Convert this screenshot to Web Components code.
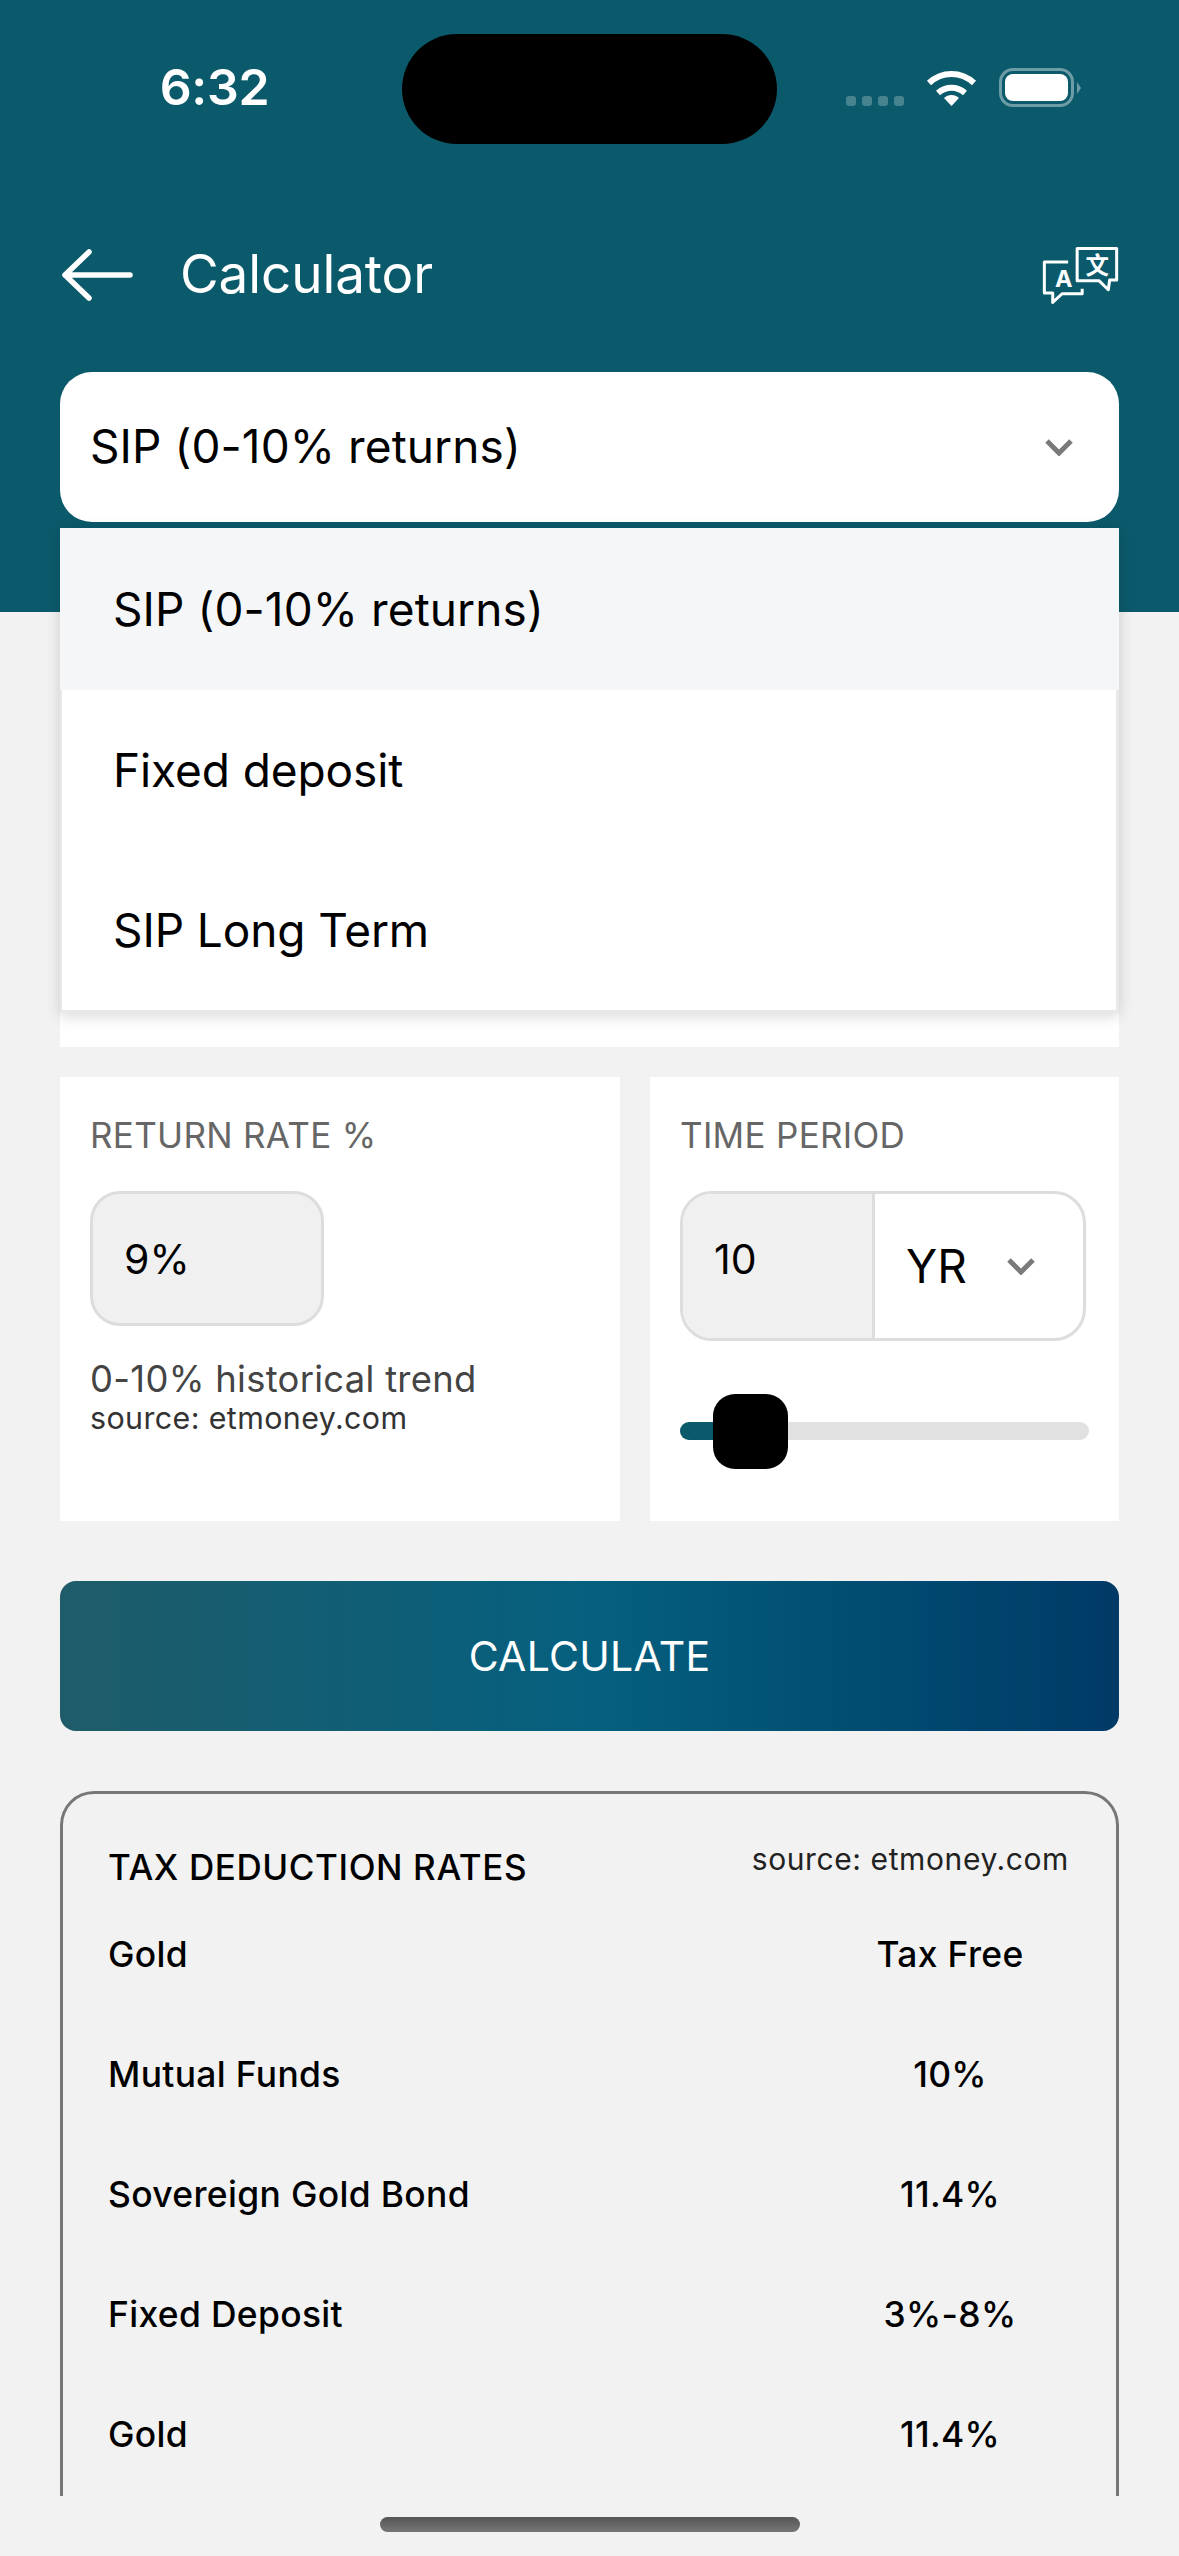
<!DOCTYPE html>
<html lang="en">
<head>
<meta charset="utf-8">
<title>Calculator</title>
<style>
  html, body { margin: 0; padding: 0; }
  body { width: 1179px; height: 2556px; overflow: hidden; background: #f2f2f2; font-family: Inter, "Noto Sans", sans-serif; color: #000; }
</style>
</head>
<body>
<calc-app></calc-app>

<script>
const chevron = (w, h) => `<svg width="${w}" height="${h}" viewBox="0 0 30 18" fill="none"><path d="M3 3 L15 15 L27 3" stroke="#7a7a7a" stroke-width="5"/></svg>`;

class StatusBar extends HTMLElement {
  connectedCallback() {
    this.attachShadow({ mode: 'open' });
    this.shadowRoot.innerHTML = `
      <style>
        :host { display: flex; height: 144px; padding-top: 34px; box-sizing: border-box; color: #fff; }
        .time { width: 402px; box-sizing: border-box; padding: 0 0 0 27px; display: flex; justify-content: center; align-items: center; height: 106px; font-size: 50px; font-weight: 600; letter-spacing: -0.3px; }
        .island { width: 375px; height: 110px; background: #000; border-radius: 55px; }
        .right { flex: 1; display: flex; align-items: flex-start; padding: 34px 0 0 69px; }
        .dots { display: flex; gap: 6px; margin: 28px 22px 0 0; }
        .dots i { width: 10px; height: 10px; border-radius: 3px; background: rgba(255,255,255,.25); }
        .wifi { margin-right: 22px; display: block; }
        .battery { display: flex; align-items: center; }
        .shell { width: 75px; height: 39px; box-sizing: border-box; border: 3px solid rgba(255,255,255,.4); border-radius: 14px; padding: 3px; }
        .shell b { display: block; height: 100%; background: #fff; border-radius: 8px; }
        .cap { width: 0; height: 0; border-left: 4px solid rgba(255,255,255,.4); border-top: 6px solid transparent; border-bottom: 6px solid transparent; margin-left: 3px; }
      </style>
      <div class="time">6:32</div>
      <div class="island"></div>
      <div class="right">
        <div class="dots"><i></i><i></i><i></i><i></i></div>
        <svg class="wifi" width="51" height="38" viewBox="0 0 51 38" fill="none">
          <path d="M3 15 C16 3 35 3 48 15" stroke="#fff" stroke-width="6"/>
          <path d="M12 25 C20 18 31 18 39 25" stroke="#fff" stroke-width="6"/>
          <path d="M18 30 C22 26 29 26 33 30 L25.5 38 Z" fill="#fff"/>
        </svg>
        <div class="battery"><div class="shell"><b></b></div><div class="cap"></div></div>
      </div>
    `;
  }
}

class AppBar extends HTMLElement {
  connectedCallback() {
    this.attachShadow({ mode: 'open' });
    this.shadowRoot.innerHTML = `
      <style>
        :host { display: flex; align-items: center; height: 90px; margin-top: 86px; padding: 0 60px; color: #fff; }
        .back { display: block; margin-right: 45px; }
        h1 { flex: 1; margin: -2px 0 0; font-size: 53px; font-weight: 400; letter-spacing: -0.1px; }
        .lang { display: block; }
        text { fill: #fff; font-family: Inter, "Noto Sans CJK SC", sans-serif; font-weight: 700; text-anchor: middle; }
      </style>
      <svg class="back" width="75" height="54" viewBox="0 0 75 54" fill="none">
        <path d="M5 27 H70 M29 4 L5 27 L29 50" stroke="#fff" stroke-width="5.5" stroke-linecap="round" stroke-linejoin="round"/>
      </svg>
      <h1>Calculator</h1>
      <svg class="lang" width="77" height="59" viewBox="730 615 230 175" fill="none">
        <path d="M835 622 H953 V716 H932 L928 745 L900 718 H835 Z" stroke="#fff" stroke-width="9" stroke-linejoin="round"/>
        <path d="M808 662 H737 V755 H762 V783 L790 757 H850 V742" stroke="#fff" stroke-width="9" stroke-linejoin="round"/>
        <text x="795" y="738" font-size="70">A</text>
        <text x="895" y="698" font-size="70">文</text>
      </svg>
    `;
  }
}

class PlanSelect extends HTMLElement {
  connectedCallback() {
    const options = (this.getAttribute('options') || '').split('|');
    this.attachShadow({ mode: 'open' });
    this.shadowRoot.innerHTML = `
      <style>
        :host { display: block; position: relative; margin: 52px 60px 0; }
        .box { display: flex; align-items: center; justify-content: space-between; height: 150px; padding: 0 45px 0 30px; background: #fff; border-radius: 32px; font-size: 46px; letter-spacing: 0.1px; }
        .box span { margin-top: -3px; }
        .menu { position: absolute; z-index: 5; left: 0; right: 0; top: 156px; background: #e8e8e8; padding-bottom: 3px; box-shadow: 0 3px 14px rgba(0,0,0,.16); }
        .opt { display: flex; align-items: center; height: 160px; padding-left: 51px; background: #fff; font-size: 46px; letter-spacing: -0.1px; margin: 0 3px 0 2px; }
        .opt.on { height: 162px; background: #f5f6f8; margin: 0; padding-left: 53px; letter-spacing: 0.1px; }
      </style>
      <div class="box"><span>${options[0]}</span>${chevron(30, 18)}</div>
      <div class="menu">
        ${options.map((o, i) => `<div class="opt${i === 0 ? ' on' : ''}">${o}</div>`).join('')}
      </div>
    `;
  }
}

class CalcCard extends HTMLElement {
  connectedCallback() {
    const label = this.getAttribute('label');
    this.attachShadow({ mode: 'open' });
    this.shadowRoot.innerHTML = `
      <style>
        :host { display: block; background: #fff; box-sizing: border-box; padding: 36px 20px 0 30px; }
        .label { font-size: 35px; line-height: 44px; color: #666; letter-spacing: 0.3px; margin-bottom: 34px; }
      </style>
      ${label ? `<div class="label">${label}</div>` : ''}
      <slot></slot>
    `;
  }
}

class ReturnRate extends HTMLElement {
  connectedCallback() {
    this.attachShadow({ mode: 'open' });
    this.shadowRoot.innerHTML = `
      <style>
        :host { display: block; }
        .input { width: 234px; height: 135px; box-sizing: border-box; border: 3px solid #ddd; border-radius: 30px; background: #f0f0f0; padding: 0 0 0 31px; display: flex; align-items: center; font-size: 41px; }
        .trend { margin-top: 30px; font-size: 36.4px; line-height: 46px; color: #444; letter-spacing: 0.3px; }
        .src { margin-top: -2px; font-size: 30.4px; line-height: 36px; color: #333; letter-spacing: 0.4px; }
      </style>
      <div class="input">${this.getAttribute('value')}</div>
      <div class="trend">${this.getAttribute('trend')}</div>
      <div class="src">${this.getAttribute('source')}</div>
    `;
  }
}

class TimePeriod extends HTMLElement {
  connectedCallback() {
    this.attachShadow({ mode: 'open' });
    this.shadowRoot.innerHTML = `
      <style>
        :host { display: block; }
        .group { display: flex; width: 406px; height: 150px; box-sizing: border-box; border: 3px solid #ddd; border-radius: 32px; overflow: hidden; }
        .num { width: 158px; background: #f0f0f0; border-right: 3px solid #ddd; display: flex; align-items: center; padding: 0 0 14px 31px; font-size: 41px; }
        .unit { flex: 1; display: flex; align-items: center; justify-content: space-between; padding: 0 47px 0 31px; font-size: 46px; }
        .track { position: relative; width: 409px; height: 18px; margin-top: 81px; background: #e1e1e1; border-radius: 9px; }
        .fill { width: 50px; height: 18px; background: #0b5a6b; border-radius: 9px 0 0 9px; }
        .thumb { position: absolute; left: 33px; top: -28px; width: 75px; height: 75px; background: #000; border-radius: 22px; }
      </style>
      <div class="group">
        <div class="num">${this.getAttribute('value')}</div>
        <div class="unit"><span>${this.getAttribute('unit')}</span>${chevron(30, 18)}</div>
      </div>
      <div class="track"><div class="fill"></div><div class="thumb"></div></div>
    `;
  }
}

class CalcButton extends HTMLElement {
  connectedCallback() {
    this.attachShadow({ mode: 'open' });
    this.shadowRoot.innerHTML = `
      <style>
        :host { display: flex; align-items: center; justify-content: center; height: 150px; border-radius: 16px; color: #fff; font-size: 41px; letter-spacing: 0.3px; background: linear-gradient(90deg, #1f5c69 0%, #05607f 50%, #00486f 82%, #003a66 100%); }
      </style>
      <slot></slot>
    `;
  }
}

class TaxTable extends HTMLElement {
  connectedCallback() {
    this.attachShadow({ mode: 'open' });
    this.shadowRoot.innerHTML = `
      <style>
        :host { display: block; border: 3px solid #777; border-bottom: 0; border-radius: 34px 34px 0 0; padding: 0 47px 0 45px; height: 705px; box-sizing: border-box; overflow: hidden; }
        .head { display: flex; justify-content: space-between; height: 100px; }
        h2 { margin: 50px 0 0; font-size: 35px; line-height: 46px; font-weight: 500; letter-spacing: 0.6px; }
        .src { margin-top: 45px; font-size: 30px; line-height: 40px; color: #222; letter-spacing: 0.6px; }
      </style>
      <div class="head"><h2>${this.getAttribute('heading')}</h2><span class="src">${this.getAttribute('source')}</span></div>
      <slot></slot>
    `;
  }
}

class TaxRow extends HTMLElement {
  connectedCallback() {
    this.attachShadow({ mode: 'open' });
    this.shadowRoot.innerHTML = `
      <style>
        :host { display: flex; align-items: center; height: 120px; font-size: 35.4px; font-weight: 500; letter-spacing: 0.35px; }
        .name { flex: 1; }
        .val { width: 238px; text-align: center; }
      </style>
      <span class="name">${this.getAttribute('name')}</span><span class="val">${this.getAttribute('value')}</span>
    `;
  }
}

class CalcApp extends HTMLElement {
  connectedCallback() {
    this.attachShadow({ mode: 'open' });
    this.shadowRoot.innerHTML = `
      <style>
        :host { display: block; height: 2556px; background: #f2f2f2; position: relative; overflow: hidden; }
        .top { height: 612px; background: #0b5a6b; }
        .scroll { height: 1884px; overflow: hidden; padding: 28px 60px 0; box-sizing: border-box; }
        .amount { height: 407px; padding: 0; }
        .pair { display: grid; grid-template-columns: 560px 469px; gap: 30px; margin-top: 30px; }
        .pair calc-card { height: 444px; }
        calc-button { margin: 60px 0; }
        .home { display: flex; justify-content: center; padding-top: 21px; }
        .home i { width: 420px; height: 15px; border-radius: 8px; background: linear-gradient(#555, #777); }
      </style>
      <div class="top">
        <status-bar></status-bar>
        <app-bar></app-bar>
        <plan-select options="SIP (0-10% returns)|Fixed deposit|SIP Long Term"></plan-select>
      </div>
      <div class="scroll">
        <calc-card class="amount"></calc-card>
        <div class="pair">
          <calc-card label="RETURN RATE %">
            <return-rate value="9%" trend="0-10% historical trend" source="source: etmoney.com"></return-rate>
          </calc-card>
          <calc-card label="TIME PERIOD">
            <time-period value="10" unit="YR"></time-period>
          </calc-card>
        </div>
        <calc-button>CALCULATE</calc-button>
        <tax-table heading="TAX DEDUCTION RATES" source="source: etmoney.com">
          <tax-row name="Gold" value="Tax Free"></tax-row>
          <tax-row name="Mutual Funds" value="10%"></tax-row>
          <tax-row name="Sovereign Gold Bond" value="11.4%"></tax-row>
          <tax-row name="Fixed Deposit" value="3%-8%"></tax-row>
          <tax-row name="Gold" value="11.4%"></tax-row>
        </tax-table>
      </div>
      <div class="home"><i></i></div>
    `;
  }
}

customElements.define('status-bar', StatusBar);
customElements.define('app-bar', AppBar);
customElements.define('plan-select', PlanSelect);
customElements.define('calc-card', CalcCard);
customElements.define('return-rate', ReturnRate);
customElements.define('time-period', TimePeriod);
customElements.define('calc-button', CalcButton);
customElements.define('tax-table', TaxTable);
customElements.define('tax-row', TaxRow);
customElements.define('calc-app', CalcApp);
</script>
</body>
</html>
